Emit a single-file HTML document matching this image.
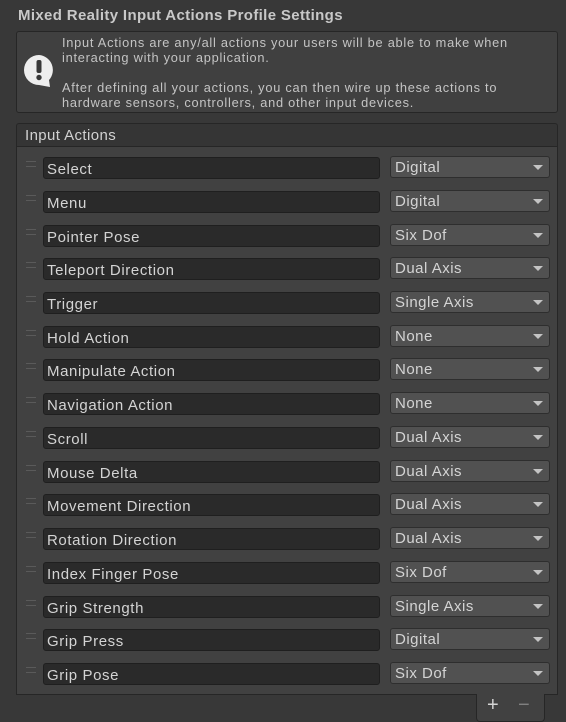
<!DOCTYPE html>
<html><head><style>
body{margin:0;width:566px;height:722px;background:#383838;font-family:"Liberation Sans",sans-serif;overflow:hidden;position:relative;color:#d2d2d2}
.t{position:absolute;left:18px;top:7px;font-size:15px;letter-spacing:.35px;font-weight:bold;color:#c8c8c8}
.help{position:absolute;left:16px;top:31px;width:540px;height:80px;background:#404040;border:1px solid #262626;border-radius:3px}
.help p{position:absolute;left:45px;margin:0;font-size:12.8px;line-height:15px;color:#c4c4c4;letter-spacing:.75px}
.hdr{position:absolute;left:16px;top:123px;background:#353535;border:1px solid #262626;border-radius:3px 3px 0 0;font-size:15px;letter-spacing:.4px;line-height:24px;padding-left:8px;box-sizing:border-box;width:542px;height:24px}
.list{position:absolute;left:16px;top:146px;width:542px;height:549px;background:#414141;border:1px solid #262626;box-sizing:border-box}
.row{position:absolute;left:0;height:22px;width:540px}
.h{position:absolute;left:9px;top:4px;width:10px;height:4px;border-top:1px solid #5a5a5a;border-bottom:1px solid #5a5a5a}
.f{position:absolute;left:26px;top:0;width:337px;height:22px;background:#2a2a2a;border:1px solid #1f1f1f;border-radius:3px;box-sizing:border-box;font-size:15px;letter-spacing:.6px;line-height:23px;padding-left:3px;color:#d4d4d4}
.d{position:absolute;left:373px;top:-1px;width:160px;height:22px;background:#515151;border:1px solid #2e2e2e;border-radius:3px;box-sizing:border-box;font-size:15px;letter-spacing:.5px;line-height:21px;padding-left:4px;color:#d4d4d4}
.d:after{content:"";position:absolute;right:6px;top:8px;border-left:5px solid transparent;border-right:5px solid transparent;border-top:5px solid #c4c4c4}
.foot{position:absolute;left:476px;top:694px;width:69px;height:28px;background:#414141;border:1px solid #262626;border-top:none;border-radius:0 0 4px 4px;box-sizing:border-box;font-size:20px;color:#d4d4d4}
</style></head><body>
<div class="t">Mixed Reality Input Actions Profile Settings</div>
<div class="help">
<svg style="position:absolute;left:6px;top:22px" width="32" height="34" viewBox="0 0 32 34"><path d="M16 1A15 15 0 1 0 16 31L27 33L26 26A15 15 0 0 0 16 1Z" fill="#eee"/><rect x="13.5" y="6" width="5" height="13" rx="2" fill="#383838"/><circle cx="16" cy="23.5" r="2.7" fill="#383838"/></svg>
<p style="top:3px">Input Actions are any/all actions your users will be able to make when<br>interacting with your application.</p>
<p style="top:48px">After defining all your actions, you can then wire up these actions to<br>hardware sensors, controllers, and other input devices.</p>
</div>
<div class="hdr">Input Actions</div>
<div class="list" id="L"></div>
<div class="foot"><span style="position:absolute;left:10px;top:0">+</span><span style="position:absolute;left:41px;top:0;color:#808080">−</span></div>
<script>
var r=[["Select","Digital"],["Menu","Digital"],["Pointer Pose","Six Dof"],["Teleport Direction","Dual Axis"],["Trigger","Single Axis"],["Hold Action","None"],["Manipulate Action","None"],["Navigation Action","None"],["Scroll","Dual Axis"],["Mouse Delta","Dual Axis"],["Movement Direction","Dual Axis"],["Rotation Direction","Dual Axis"],["Index Finger Pose","Six Dof"],["Grip Strength","Single Axis"],["Grip Press","Digital"],["Grip Pose","Six Dof"]];
var h="";r.forEach(function(x,i){h+='<div class="row" style="top:'+(10+i*33.73).toFixed(1)+'px"><div class="h"></div><div class="f">'+x[0]+'</div><div class="d">'+x[1]+'</div></div>'});
document.getElementById("L").innerHTML=h;
</script>
</body></html>
